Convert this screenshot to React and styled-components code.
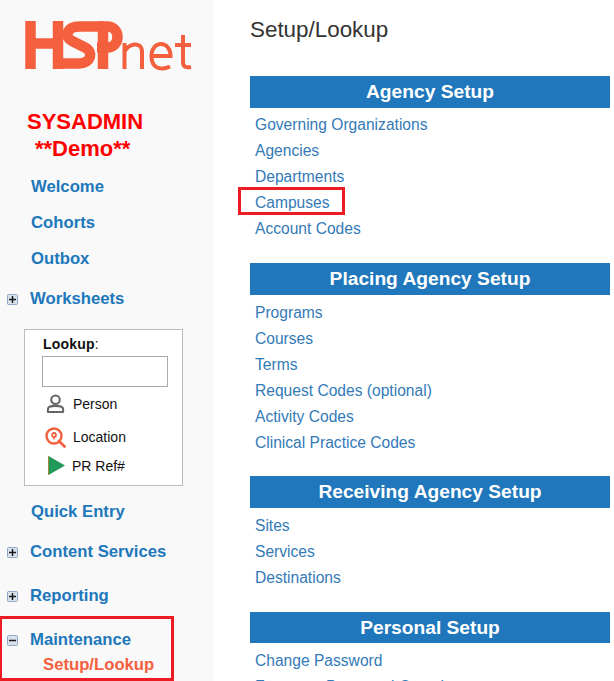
import React from "react";
import styled, { createGlobalStyle } from "styled-components";

const GlobalStyle = createGlobalStyle`
  html, body {
    margin: 0;
    padding: 0;
    height: 681px;
    overflow: hidden;
    background: #fff;
    font-family: "Liberation Sans", Arial, sans-serif;
  }
`;

const sections = [
  {
    title: "Agency Setup",
    links: ["Governing Organizations", "Agencies", "Departments", "Campuses", "Account Codes"],
  },
  {
    title: "Placing Agency Setup",
    links: ["Programs", "Courses", "Terms", "Request Codes (optional)", "Activity Codes", "Clinical Practice Codes"],
  },
  {
    title: "Receiving Agency Setup",
    links: ["Sites", "Services", "Destinations"],
  },
  {
    title: "Personal Setup",
    links: ["Change Password", "Forgotten Password Question"],
  },
];

function Logo() {
  return (
    <LogoSvg viewBox="0 0 214 80" role="img" aria-label="HSPnet">
      <g fill="none" stroke="#f4603e" strokeWidth="10.500">
        <path d="M30.500 21V69M58 21V69M30 43.500H58" />
        <path d="M104 26.500H80C66 26.500 64 37 72 41L85 47.500C94 52 91 63.500 79 63.500H58" />
        <path d="M103 69V26.500H107C121 26.500 121 47.500 107 47.500H97" />
      </g>
      <g fill="none" stroke="#f4603e" strokeWidth="4">
        <path d="M124.500 69V43M124.500 52C127 44 142 40 142 52V69" />
        <path d="M151.500 56H170.500C170.500 40 151.500 40 151.500 56C151.500 70 163 70 170 66.500" />
        <path d="M183 35V62C183 67 186 68 191 67M175 45H191" />
      </g>
    </LogoSvg>
  );
}

function TreeIcon({ open }) {
  return (
    <TreeSvg viewBox="0 0 11 11">
      <rect x="0.500" y="0.500" width="10" height="10" rx="1" fill="#d9e1ea" stroke="#8fa9c6" />
      <path d={open ? "M2 5.500H9" : "M2 5.500H9M5.500 2V9"} stroke="#1c1c1c" strokeWidth="1.500" />
    </TreeSvg>
  );
}

function PersonIcon() {
  return (
    <svg width="19" height="20" viewBox="0 0 20 21" fill="none" stroke="#666" strokeWidth="2.200">
      <circle cx="10" cy="6" r="4.500" />
      <path d="M2 19V16C2 13.500 5 12.500 10 12.500S18 13.500 18 16V19Z" strokeLinejoin="round" />
    </svg>
  );
}

function LocationIcon() {
  return (
    <svg width="21" height="21" viewBox="0 0 21 21" fill="none" stroke="#f4603e" strokeWidth="2.400">
      <circle cx="9" cy="9" r="7.500" />
      <path d="M14 14L19.500 19.500" strokeWidth="2.800" strokeLinecap="round" />
      <circle cx="9" cy="8" r="2" strokeWidth="1.800" />
      <path d="M9 10.500V12.500" strokeWidth="1.500" />
    </svg>
  );
}

function PlayIcon() {
  return (
    <svg width="17" height="19" viewBox="0 0 17 19">
      <path d="M0.500 0L17 9.500L0.500 19Z" fill="#21995a" />
      <path d="M0.500 0V19" stroke="#a08a3c" strokeWidth="1" />
    </svg>
  );
}

export default function App() {
  return (
    <>
      <GlobalStyle />
      <Page>
        <Sidebar>
          <Logo />
          <UserBlock>
            <UserLine>SYSADMIN</UserLine>
            <UserLine $indent>**Demo**</UserLine>
          </UserBlock>
          <NavLink $top={7}>Welcome</NavLink>
          <NavLink>Cohorts</NavLink>
          <NavLink>Outbox</NavLink>
          <TreeRow $top={4}>
            <TreeIcon />
            <span>Worksheets</span>
          </TreeRow>
          <LookupBox>
            <LookupLabel>
              <b>Lookup</b>:
            </LookupLabel>
            <LookupInput type="text" />
            <LookupOption $height={33} $gap={8}>
              <OptionIcon $left={1}><PersonIcon /></OptionIcon>
              Person
            </LookupOption>
            <LookupOption $height={31} $gap={7}>
              <OptionIcon><LocationIcon /></OptionIcon>
              Location
            </LookupOption>
            <LookupOption $height={25} $gap={7}>
              <OptionIcon $left={3} $lift={2}><PlayIcon /></OptionIcon>
              PR Ref#
            </LookupOption>
          </LookupBox>
          <NavLink $top={8}>Quick Entry</NavLink>
          <TreeRow $top={4}>
            <TreeIcon />
            <span>Content Services</span>
          </TreeRow>
          <TreeRow $top={8}>
            <TreeIcon />
            <span>Reporting</span>
          </TreeRow>
          <MaintenanceBox>
            <MaintenanceRow>
              <TreeIcon open />
              <span>Maintenance</span>
            </MaintenanceRow>
            <SubLink>Setup/Lookup</SubLink>
          </MaintenanceBox>
        </Sidebar>
        <Main>
          <Title>Setup/Lookup</Title>
          {sections.map((section) => (
            <Section key={section.title}>
              <SectionHeader>{section.title}</SectionHeader>
              <LinkList>
                {section.links.map((link) => (
                  <SetupLink key={link} $marked={link === "Campuses"}>
                    {link}
                  </SetupLink>
                ))}
              </LinkList>
            </Section>
          ))}
        </Main>
      </Page>
    </>
  );
}

const Page = styled.div`
  display: flex;
  width: 614px;
  height: 681px;
  overflow: hidden;
`;

const Sidebar = styled.aside`
  flex: 0 0 214px;
  display: flex;
  flex-direction: column;
  background: #f9f9f9;
`;

const LogoSvg = styled.svg`
  display: block;
  flex: none;
  width: 214px;
  height: 80px;
`;

const UserBlock = styled.div`
  margin-top: 27.500px;
  padding-left: 27px;
`;

const UserLine = styled.div`
  height: 27px;
  line-height: 27px;
  font-size: 22px;
  font-weight: bold;
  color: #ff0000;
  padding-left: ${(p) => (p.$indent ? "8px" : "0")};
`;

const NavLink = styled.div`
  flex: none;
  height: 36px;
  line-height: 36px;
  margin-top: ${(p) => p.$top || 0}px;
  padding-left: 31px;
  font-size: 16.700px;
  font-weight: bold;
  color: #2077bb;
`;

const TreeRow = styled.div`
  flex: none;
  display: flex;
  align-items: center;
  gap: 11px;
  height: 36px;
  margin-top: ${(p) => p.$top || 0}px;
  padding-left: 7px;
  font-size: 16.700px;
  font-weight: bold;
  color: #2077bb;
`;

const TreeSvg = styled.svg`
  flex: none;
  width: 11px;
  height: 11px;
  margin: 1px 1px 0 0;
`;

const LookupBox = styled.div`
  flex: none;
  box-sizing: border-box;
  width: 159px;
  height: 157px;
  margin: 12px 0 0 24px;
  padding: 6px 14px 0 17px;
  background: #fff;
  border: 1px solid #bcbcbc;
  color: #111;
`;

const LookupLabel = styled.div`
  height: 20px;
  line-height: 16px;
  padding-left: 1px;
  font-size: 14px;
  letter-spacing: 0.200px;
`;

const LookupInput = styled.input`
  display: block;
  box-sizing: border-box;
  width: 126px;
  height: 31px;
  margin: 0;
  padding: 0;
  background: #fff;
  border: 1px solid #a9a9a9;
`;

const LookupOption = styled.div`
  display: flex;
  align-items: center;
  gap: ${(p) => p.$gap}px;
  height: ${(p) => p.$height}px;
  padding-left: 3px;
  padding-top: 1px;
  font-size: 14px;
`;

const OptionIcon = styled.span`
  display: flex;
  flex: none;
  margin-left: ${(p) => p.$left || 0}px;
  margin-top: ${(p) => -(p.$lift || 0)}px;
`;

const MaintenanceBox = styled.div`
  flex: none;
  box-sizing: border-box;
  width: 174px;
  height: 65px;
  margin-top: 2px;
  padding-top: 7px;
  border: 3px solid #ed1c24;
  border-left-width: 2px;
`;

const MaintenanceRow = styled(TreeRow)`
  height: 28px;
  padding-left: 5px;
`;

const SubLink = styled.div`
  height: 22px;
  line-height: 22px;
  padding-left: 41px;
  font-size: 16.700px;
  font-weight: bold;
  color: #f4603e;
`;

const Main = styled.main`
  flex: 1;
  min-width: 0;
  padding: 0 4px 0 36px;
`;

const Title = styled.h1`
  height: 76px;
  margin: 0;
  padding-top: 16px;
  box-sizing: border-box;
  line-height: 28px;
  font-size: 22.400px;
  font-weight: normal;
  color: #333;
`;

const Section = styled.section`
  padding-bottom: 20.800px;
`;

const SectionHeader = styled.h2`
  height: 31.600px;
  margin: 0;
  line-height: 31px;
  font-size: 19.200px;
  font-weight: bold;
  text-align: center;
  color: #fff;
  background: #2077bb;
`;

const LinkList = styled.div`
  padding-top: 4.800px;
`;

const SetupLink = styled.div`
  position: relative;
  height: 26px;
  line-height: 26px;
  padding-left: 5px;
  font-size: 15.600px;
  color: #337ab7;

  ${(p) =>
    p.$marked &&
    `
    &::after {
      content: "";
      position: absolute;
      left: -12px;
      top: -3px;
      width: 107px;
      height: 28px;
      box-sizing: border-box;
      border: 3px solid #ed1c24;
    }
  `}
`;
